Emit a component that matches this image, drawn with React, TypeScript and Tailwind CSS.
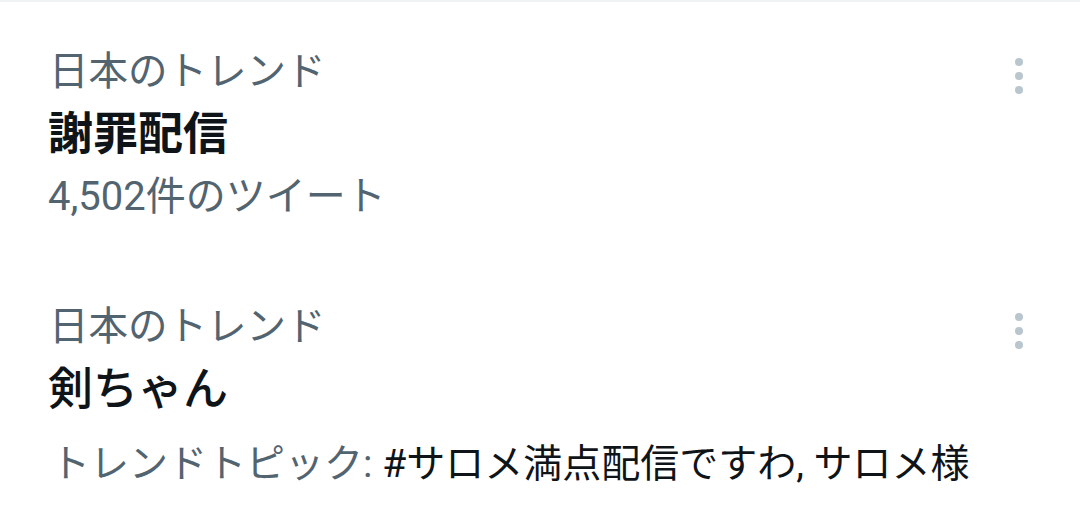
import React from "react";

const font = { fontFamily: 'Roboto, "Noto Sans CJK JP", "Noto Sans", sans-serif' };

function Dots() {
  return (
    <div className="flex flex-col items-center gap-[6px] pt-[17px]">
      <div className="w-[8px] h-[8px] rounded-full bg-[#b9c6ce]" />
      <div className="w-[8px] h-[8px] rounded-full bg-[#b9c6ce]" />
      <div className="w-[8px] h-[8px] rounded-full bg-[#b9c6ce]" />
    </div>
  );
}

export default function App() {
  return (
    <div
      className="w-[1080px] h-[527px] bg-white border-t-2 border-[#eff3f4] overflow-hidden"
      style={font}
    >
      <div className="flex justify-between pl-[48px] pr-[57px] pt-[39px]">
        <div className="flex flex-col">
          <div className="text-[39.5px] leading-[62px] text-[#536471] pl-[1px]">日本のトレンド</div>
          <div className="text-[45px] leading-[62px] font-bold text-[#0f1419] pt-[1px]">謝罪配信</div>
          <div className="text-[40px] leading-[62px] text-[#536471]">4,502件のツイート</div>
        </div>
        <Dots />
      </div>
      <div className="flex justify-between pl-[48px] pr-[57px] pt-[68px]">
        <div className="flex flex-col">
          <div className="text-[39.5px] leading-[62px] text-[#536471] pl-[1px]">日本のトレンド</div>
          <div className="text-[45px] leading-[62px] font-medium text-[#0f1419] pt-[1px]">剣ちゃん</div>
          <div className="text-[39px] leading-[62px] mt-[12px] pl-[3px] whitespace-nowrap">
            <span className="text-[#536471]">トレンドトピック: </span>
            <span className="text-[#0f1419]">#サロメ満点配信ですわ, サロメ様</span>
          </div>
        </div>
        <Dots />
      </div>
    </div>
  );
}
